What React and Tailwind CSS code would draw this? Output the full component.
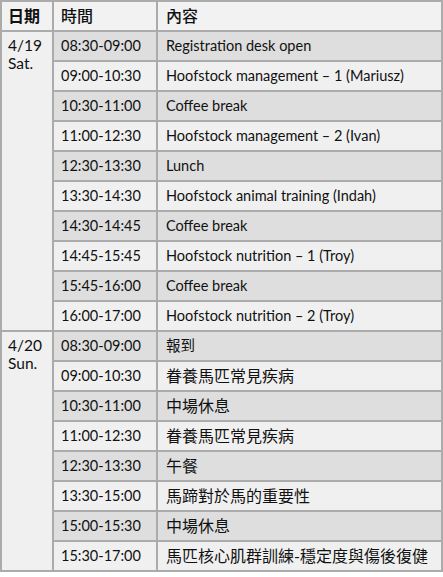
const day1 = [
  ["08:30-09:00", "Registration desk open"],
  ["09:00-10:30", "Hoofstock management – 1 (Mariusz)"],
  ["10:30-11:00", "Coffee break"],
  ["11:00-12:30", "Hoofstock management – 2 (Ivan)"],
  ["12:30-13:30", "Lunch"],
  ["13:30-14:30", "Hoofstock animal training (Indah)"],
  ["14:30-14:45", "Coffee break"],
  ["14:45-15:45", "Hoofstock nutrition – 1 (Troy)"],
  ["15:45-16:00", "Coffee break"],
  ["16:00-17:00", "Hoofstock nutrition – 2 (Troy)"],
];

const day2 = [
  ["08:30-09:00", "報到"],
  ["09:00-10:30", "眷養馬匹常見疾病"],
  ["10:30-11:00", "中場休息"],
  ["11:00-12:30", "眷養馬匹常見疾病"],
  ["12:30-13:30", "午餐"],
  ["13:30-15:00", "馬蹄對於馬的重要性"],
  ["15:00-15:30", "中場休息"],
  ["15:30-17:00", "馬匹核心肌群訓練-穩定度與傷後復健"],
];

function Rows({ rows }) {
  return rows.map(([time, what], i) => {
    const bg = i % 2 === 0 ? "bg-[#dedede]" : "bg-[#f0f0f0]";
    return [
      <div key={"t" + i} className={`${bg} flex items-center pl-[7px]`}>
        {time}
      </div>,
      <div key={"w" + i} className={`${bg} flex items-center pl-[8px] text-[16px] whitespace-nowrap`}>
        <span className="text-[14.5px]">{what}</span>
      </div>,
    ];
  });
}

function DayCell({ date, dow, span }) {
  return (
    <div className={`bg-[#f0f0f0] ${span} pl-[6px] pt-[4px] leading-[18px] text-[15.5px]`}>
      <div>{date}</div>
      <div>{dow}</div>
    </div>
  );
}

export default function App() {
  return (
    <div className="w-[443px] h-[577px] bg-white">
      <div
        className="grid grid-cols-[50px_102px_283px] auto-rows-[28px] gap-[2px] p-[2px] bg-[#ababab] text-[14.5px] text-[#111]"
        style={{ fontFamily: 'Lato, "Noto Sans CJK TC", sans-serif' }}
      >
        <div className="bg-[#f2f2f2] flex items-center pl-[6px] text-[16px] font-bold">日期</div>
        <div className="bg-[#f2f2f2] flex items-center pl-[7px] text-[16px] font-medium">時間</div>
        <div className="bg-[#f2f2f2] flex items-center pl-[8px] text-[16px] font-medium">內容</div>

        <DayCell date="4/19" dow="Sat." span="row-span-10" />
        <Rows rows={day1.slice(0, 1)} />
        {day1.slice(1).map(([time, what], j) => {
          const i = j + 1;
          const bg = i % 2 === 0 ? "bg-[#dedede]" : "bg-[#f0f0f0]";
          return [
            <div key={"a" + i} className={`${bg} col-start-2 flex items-center pl-[7px]`}>{time}</div>,
            <div key={"b" + i} className={`${bg} flex items-center pl-[8px] whitespace-nowrap`}>{what}</div>,
          ];
        })}

        <DayCell date="4/20" dow="Sun." span="row-span-8" />
        <Rows rows={day2.slice(0, 1)} />
        {day2.slice(1).map(([time, what], j) => {
          const i = j + 1;
          const bg = i % 2 === 0 ? "bg-[#dedede]" : "bg-[#f0f0f0]";
          return [
            <div key={"c" + i} className={`${bg} col-start-2 flex items-center pl-[7px]`}>{time}</div>,
            <div key={"d" + i} className={`${bg} flex items-center pl-[8px] whitespace-nowrap text-[16px]`}>{what}</div>,
          ];
        })}
      </div>
    </div>
  );
}
